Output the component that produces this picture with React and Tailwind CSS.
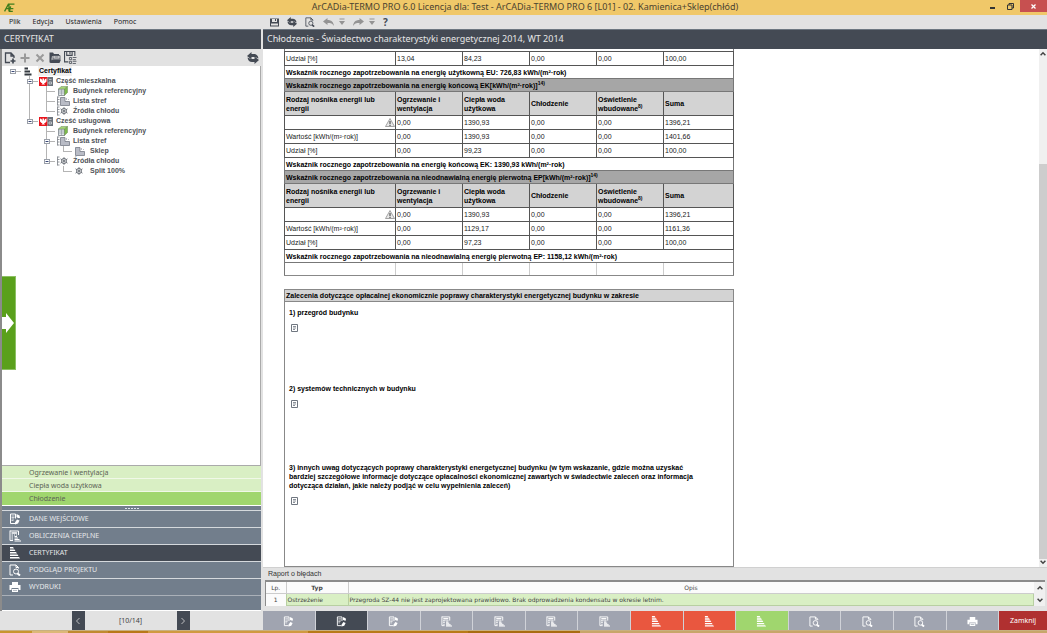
import React, { useState } from 'react';

const Logo = () => (
  <svg viewBox="0 0 20 16" className="h-[9px] w-[11px]" fill="none" stroke="#3f7d1c" strokeWidth="2.4">
    <path d="M1 15L8 2H19M4 10H17M9 2V15M12 6L10 15H16" />
  </svg>
);

const SaveIcon = () => (
  <svg viewBox="0 0 18 18" className="h-[9px] w-[9px]">
    <path d="M0 1H18V17H0Z" fill="#444a54" />
    <path d="M4 2H14V8H4ZM2 11H16V15H2Z" fill="#e2e2e2" />
    <path d="M10 2H12V6H10Z" fill="#444a54" />
  </svg>
);

const RefreshIcon = ({ className = 'h-[10px] w-[10px]' }) => (
  <svg viewBox="0 0 24 24" className={className} fill="#444a54">
    <path d="M0 8L9 0V4H14C19 4 22 7 23 13L16 10H9V15Z" />
    <path d="M24 16L15 24V20H10C5 20 2 17 1 11L8 14H15V9Z" />
  </svg>
);

const PreviewIcon = ({ color = '#fff', className = 'h-3 w-3' }) => (
  <svg viewBox="0 0 24 24" className={className} fill="none" stroke={color} strokeWidth="2">
    <path d="M8 22H2V2H14L19 7V9M14 2V7H19" />
    <circle cx="14" cy="15" r="5" />
    <path d="M17 19L22 23" strokeWidth="4" />
  </svg>
);

const EditDocIcon = ({ className = 'h-3 w-3' }) => (
  <svg viewBox="0 0 24 24" className={className} fill="none" stroke="#fff" strokeWidth="2">
    <path d="M12 21H3V2H13V11" />
    <path d="M5 6H11M5 9H11M5 12H10M5 15H9" strokeWidth="1.4" />
    <path d="M15 2L21 5L22 10H18L15 8Z" fill="#fff" stroke="none" />
    <path d="M12 19L16 13L21 15L18 21L12 23Z" fill="#fff" stroke="none" />
  </svg>
);

const CalcIcon = ({ className = 'h-3 w-3' }) => (
  <svg viewBox="0 0 24 24" className={className} fill="none" stroke="#fff">
    <path d="M2 2H19V10M2 1V21H8" strokeWidth="2" />
    <path d="M5 6H16" strokeWidth="3" />
    <path d="M5 10H8M10 10H12M14 10H16M5 14H8M5 18H8" strokeWidth="2.4" />
    <path d="M11 13H16M11 16H18M11 19H21M11 22H24" strokeWidth="2.2" />
  </svg>
);

const StairsIcon = ({ color = '#fff', className = 'h-3 w-3' }) => (
  <svg viewBox="0 0 24 24" className={className} fill={color}>
    <path d="M2 0H8L10 3H2ZM2 5H11L13 8H2ZM2 10H14L16 13H2ZM2 15H17L19 18H2ZM2 20H20L22 23H2Z" />
  </svg>
);

const CertIcon = () => (
  <svg viewBox="0 0 16 18" className="h-[9px] w-2" fill="#33383f">
    <path d="M1 1H8V5H1ZM1 7H12V11H1ZM1 13H15V17H1Z" />
  </svg>
);

const PrinterIcon = ({ className = 'h-3 w-3' }) => (
  <svg viewBox="0 0 24 24" className={className}>
    <path d="M6 2H18V8H6ZM1 8H23V18H19V14H5V18H1ZM6 16H18V22H6Z" fill="#fff" />
    <path d="M8 18H16V19H8Z" fill="#727e8c" />
  </svg>
);

const NewDocIcon = () => (
  <svg viewBox="0 0 24 24" className="h-3 w-3" fill="none" stroke="#444a54" strokeWidth="2.6">
    <path d="M12 21H3V2H14L20 8V12M14 2V8H20" />
    <path d="M18 13V23M13 18H23" strokeWidth="3.4" />
  </svg>
);

const OpenIcon = () => (
  <svg viewBox="0 0 24 24" className="h-3 w-3">
    <path d="M1 1H8L10 4H20V8H6L4 21H1Z" fill="#444a54" />
    <path d="M8 7H22V14H8Z" fill="#e2e2e2" stroke="#444a54" strokeWidth="1.6" />
    <path d="M11 10H19" stroke="#444a54" strokeWidth="1.6" />
    <path d="M5 15H24L21 22H2Z" fill="#444a54" />
  </svg>
);

const SaveListIcon = () => (
  <svg viewBox="0 0 24 24" className="h-[13px] w-[13px]" fill="none" stroke="#444a54" strokeWidth="2">
    <path d="M8 20H1V1H20V9M5 1V8H15V1M11 2V6" />
    <path d="M10 12H14V16H10ZM10 19H14V23H10ZM16 12H23M16 16H22M16 19H23M16 23H22" strokeWidth="1.5" />
  </svg>
);

const WarningIcon = () => (
  <svg viewBox="0 0 20 18" className="h-[9px] w-[10px]">
    <path d="M10 1L19 17H1Z" fill="#e9e9e9" stroke="#8e8e8e" strokeWidth="1.6" />
    <path d="M10 6V12M10 13.5V16" stroke="#333" strokeWidth="2" />
  </svg>
);

const NoteIcon = () => (
  <svg viewBox="0 0 14 16" className="h-2 w-[7px]" fill="none" stroke="#6f7680" strokeWidth="2">
    <path d="M1 1H13V15H1Z" fill="#fff" />
    <path d="M4 5H10M4 8H10M4 11H8" strokeWidth="1.6" />
  </svg>
);

const ArrowIcon = ({ flip }) => (
  <svg viewBox="0 0 22 16" className={`h-2 w-[11px] ${flip ? '-scale-x-100' : ''}`} fill="#949494">
    <path d="M0 7L9 0V4C17 4 21 8 22 16C19 11 16 10 9 10V14Z" />
  </svg>
);

const DropIcon = () => (
  <svg viewBox="0 0 12 16" className="h-2 w-[6px]" fill="#949494">
    <path d="M1 1H11V3H1ZM0 6H12L6 14Z" />
  </svg>
);

const EagleIcon = () => (
  <svg viewBox="0 0 28 18" className="h-[9px] w-[14px]">
    <path d="M0 0H17V18H0Z" fill="#e8141c" />
    <path d="M2 3L5 4L7 8V3H10V8L12 4L15 3V9L12 12H10L12 15H5L7 12H5L2 9Z" fill="#fff" />
    <path d="M17 0H28V18H17Z" fill="#6b727b" />
    <path d="M20 5H25M20 10H25V14H20Z" stroke="#d5d8db" strokeWidth="1.5" fill="none" />
  </svg>
);

const CubeIcon = () => (
  <svg viewBox="0 0 20 20" className="h-[10px] w-[10px]">
    <path d="M1 6H13V19H1Z" fill="#dfe5e8" stroke="#6b727b" strokeWidth="1.4" />
    <path d="M1 6L6 1H19L13 6Z" fill="#a6d37a" stroke="#6f8a5b" />
    <path d="M13 6L19 1V13L13 19Z" fill="#7dbb4c" stroke="#6f8a5b" />
    <path d="M1 10H13M1 14H13M7 6V19" stroke="#8d959d" strokeWidth="1.2" />
  </svg>
);

const Bracket = () => (
  <svg viewBox="0 0 8 20" className="h-[10px] w-1" fill="none" stroke="#777c84" strokeWidth="1.6">
    <path d="M3 1V19M3 2H7M3 7H7M3 12H7M3 18H7" />
  </svg>
);

const ZoneIcon = () => (
  <svg viewBox="0 0 20 18" className="h-[9px] w-[10px]">
    <path d="M1 1H10V9H19V17H1Z" fill="#b9bcc6" stroke="#777c88" strokeWidth="1.6" />
    <path d="M13 2V6M17 4V6" stroke="#a9acb6" strokeWidth="1.6" />
  </svg>
);

const FlakeIcon = () => (
  <svg viewBox="0 0 18 18" className="h-2 w-2" fill="none" stroke="#50565f" strokeWidth="1.5">
    <path d="M9 0V18M1 4L17 14M17 4L1 14" />
    <circle cx="9" cy="9" r="6" />
  </svg>
);

const treeIcons = {
  cert: <CertIcon />,
  eagle: <EagleIcon />,
  cube: <CubeIcon />,
  zones: <><Bracket /><ZoneIcon /></>,
  zone: <ZoneIcon />,
  coolList: <><Bracket /><FlakeIcon /></>,
  cool: <FlakeIcon />,
};

// guides: b = blank, v = vertical, t = branch, e = last branch, n = open node, l = last open node, r = root
const treeRows = [
  { guides: 'r', icon: 'cert', label: 'Certyfikat' },
  { guides: 'bn', icon: 'eagle', label: 'Część mieszkalna' },
  { guides: 'bvt', icon: 'cube', label: 'Budynek referencyjny' },
  { guides: 'bvt', icon: 'zones', label: 'Lista stref' },
  { guides: 'bve', icon: 'coolList', label: 'Źródła chłodu' },
  { guides: 'bl', icon: 'eagle', label: 'Cześć usługowa' },
  { guides: 'bbt', icon: 'cube', label: 'Budynek referencyjny' },
  { guides: 'bbn', icon: 'zones', label: 'Lista stref' },
  { guides: 'bbve', icon: 'zone', label: 'Sklep' },
  { guides: 'bbl', icon: 'coolList', label: 'Źródła chłodu' },
  { guides: 'bbbe', icon: 'cool', label: 'Split 100%' },
];

const Guide = ({ type }) => {
  const up = 'vtenl'.includes(type);
  const down = 'vtn'.includes(type);
  const side = 'tenlr'.includes(type);
  return (
    <svg viewBox="0 0 17 10" className="h-[10px] w-[17px] shrink-0" fill="none" stroke="#b4b4b4">
      {up && <path d="M8.5 0V5" />}
      {down && <path d="M8.5 5V10" />}
      {side && <path d="M8 5.5H17" />}
      {'nlr'.includes(type) && (
        <g>
          <rect x="6.5" y="3.5" width="5" height="4" fill="#fff" stroke="#9a9fa8" />
          <path d="M7.5 5.5H10.5" stroke="#3b4a78" />
        </g>
      )}
    </svg>
  );
};

const Sup = ({ children }) => <sup className="text-[5px] leading-none">{children}</sup>;

const energyColumns = [
  'Rodzaj nośnika energii lub energii',
  'Ogrzewanie i wentylacja',
  'Ciepła woda użytkowa',
  'Chłodzenie',
  <>Oświetlenie wbudowane<Sup>8)</Sup></>,
  'Suma',
];

const ek = [
  ['', '0,00', '1390,93', '0,00', '0,00', '1396,21'],
  ['Wartość [kWh/(m²·rok)]', '0,00', '1390,93', '0,00', '0,00', '1401,66'],
  ['Udział [%]', '0,00', '99,23', '0,00', '0,00', '100,00'],
];

const ep = [
  ['', '0,00', '1390,93', '0,00', '0,00', '1396,21'],
  ['Wartość [kWh/(m²·rok)]', '0,00', '1129,17', '0,00', '0,00', '1161,36'],
  ['Udział [%]', '0,00', '97,23', '0,00', '0,00', '100,00'],
];

const DataRow = ({ cells }) => (
  <tr className="h-[14px]">
    {cells.map((cell, i) => (
      <td key={i} className="border border-[#555] p-0 pl-px text-[#222]">
        {cell || <span className="flex justify-end"><WarningIcon /></span>}
      </td>
    ))}
  </tr>
);

const SummaryRow = ({ children }) => (
  <tr className="h-[13px]">
    <td colSpan={6} className="border border-[#777] p-0 pl-px font-bold">{children}</td>
  </tr>
);

const EnergySection = ({ title, rows, summary }) => (
  <>
    <tr className="h-[13px] bg-[#a6a6a6]">
      <th colSpan={6} className="border border-[#777] p-0 pl-px text-left font-bold">{title}<Sup>14)</Sup></th>
    </tr>
    <tr className="h-6 bg-[#d3d3d3]">
      {energyColumns.map((column, i) => (
        <th key={i} className="border border-[#555] p-0 pl-px text-left leading-[9px] font-bold">{column}</th>
      ))}
    </tr>
    {rows.map((cells, i) => (
      <DataRow key={i} cells={cells} />
    ))}
    <SummaryRow>{summary}</SummaryRow>
  </>
);

const EnergyTable = () => (
  <table className="w-[450px] table-fixed border-collapse border border-[#777] leading-[9px]">
    <colgroup>
      <col className="w-[111px]" />
      <col className="w-[67px]" />
      <col className="w-[67px]" />
      <col className="w-[67px]" />
      <col className="w-[67px]" />
      <col />
    </colgroup>
    <tbody>
      <DataRow cells={['Udział [%]', '13,04', '84,23', '0,00', '0,00', '100,00']} />
      <SummaryRow>Wskaźnik rocznego zapotrzebowania na energię użytkowną EU: 726,83 kWh/(m²·rok)</SummaryRow>
      <EnergySection
        title="Wskaźnik rocznego zapotrzebowania na energię końcową EK[kWh/(m²·rok)]"
        rows={ek}
        summary="Wskaźnik rocznego zapotrzebowania na energię końcową EK: 1390,93 kWh/(m²·rok)"
      />
      <EnergySection
        title="Wskaźnik rocznego zapotrzebowania na nieodnawialną energię pierwotną EP[kWh/(m²·rok)]"
        rows={ep}
        summary="Wskaźnik rocznego zapotrzebowania na nieodnawialną energię pierwotną EP: 1158,12 kWh/(m²·rok)"
      />
      <tr className="h-[13px]">
        {[0, 1, 2, 3, 4, 5].map((i) => (
          <td key={i} className="border border-[#ccc] border-b-[#888] p-0 first:border-l-[#777] last:border-r-[#777]" />
        ))}
      </tr>
    </tbody>
  </table>
);

const Recommendation = ({ children, className = '' }) => (
  <section className={`flex flex-col items-start gap-[7px] px-1 leading-[9px] ${className}`}>
    <h3 className="font-bold">{children}</h3>
    <button aria-label="Edytuj" className="ml-[2px]"><NoteIcon /></button>
  </section>
);

const Chevron = ({ d }) => (
  <svg viewBox="0 0 10 10" className="h-[6px] w-[6px]" fill="none" stroke="#444" strokeWidth="2.5"><path d={d} /></svg>
);

const navItems = [
  { label: 'DANE WEJŚCIOWE', Icon: EditDocIcon },
  { label: 'OBLICZENIA CIEPLNE', Icon: CalcIcon },
  { label: 'CERTYFIKAT', Icon: StairsIcon },
  { label: 'PODGLĄD PROJEKTU', Icon: PreviewIcon },
  { label: 'WYDRUKI', Icon: PrinterIcon },
];

const Sidebar = () => {
  const [section, setSection] = useState('CERTYFIKAT');
  const [step, setStep] = useState('Chłodzenie');

  return (
    <aside className="flex w-[261px] shrink-0 flex-col bg-[#e2e2e2]">
      <h2 className="h-5 border-t border-[#6d7781] bg-[#444a54] pl-1 text-[9px] leading-[17px] text-[#e6e6e6]">CERTYFIKAT</h2>
      <div className="flex min-h-0 flex-1 flex-col border-l-2 border-[#8b8b8b]">
        <div className="flex h-[17px] shrink-0 items-center gap-[3px] pr-[2px] pl-[2px]">
          <button aria-label="Nowy"><NewDocIcon /></button>
          <button aria-label="Dodaj">
            <svg viewBox="0 0 24 24" className="h-3 w-3" stroke="#9a9a9a" strokeWidth="4"><path d="M12 3V21M3 12H21" /></svg>
          </button>
          <button aria-label="Usuń">
            <svg viewBox="0 0 24 24" className="h-3 w-3" stroke="#9a9a9a" strokeWidth="4"><path d="M5 5L19 19M19 5L5 19" /></svg>
          </button>
          <button aria-label="Otwórz"><OpenIcon /></button>
          <button aria-label="Zapisz listę"><SaveListIcon /></button>
          <button aria-label="Odśwież" className="ml-auto"><RefreshIcon className="h-3 w-3" /></button>
        </div>

        <div className="relative min-h-0 flex-1 overflow-hidden border-r border-[#aaa] bg-white">
          <ul className="pl-[2px] font-['Liberation_Sans',Arial,sans-serif] text-[7px] font-bold text-[#4f5358]">
            {treeRows.map(({ guides, icon, label }, i) => (
              <li key={i} className="flex h-[10px] items-center">
                {guides.split('').map((type, j) => (
                  <Guide key={j} type={type} />
                ))}
                <span className="flex w-[17px] shrink-0 items-center pl-px">
                  {guides === 'r' || icon === 'zone' || icon === 'cool' || icon === 'cube' ? <span className="w-[2px]" /> : null}
                  {treeIcons[icon]}
                </span>
                <span className={`leading-[10px] ${i === 0 ? 'bg-[#f0f0f0] px-px text-black' : 'px-px'}`}>{label}</span>
              </li>
            ))}
          </ul>
          <button
            aria-label="Rozwiń"
            className="absolute top-[210px] left-0 flex h-[94px] w-[14px] items-center border-y border-r border-[#8cc063] bg-[#5aa01c]"
          >
            <svg viewBox="0 0 12 20" className="h-5 w-3" fill="#fff"><path d="M0 4H4V0L12 10L4 20V16H0Z" /></svg>
          </button>
        </div>

        <div className="shrink-0 border-t border-[#aaa] text-[7px] text-[#5c6356]">
          {['Ogrzewanie i wentylacja', 'Ciepła woda użytkowa', 'Chłodzenie'].map((label) => (
            <button
              key={label}
              onClick={() => setStep(label)}
              className={`block h-[13px] w-full pl-[27px] text-left leading-[14px] ${
                step === label ? 'bg-[#a0d66e]' : 'border-b border-[#f0f8e8] bg-[#d9efc4]'
              }`}
            >
              {label}
            </button>
          ))}
        </div>

        <div className="flex h-[5px] shrink-0 items-center justify-center gap-px border-t border-white bg-[#727e8c]">
          {[0, 1, 2, 3, 4].map((i) => (
            <span key={i} className="h-px w-[2px] bg-[#dfe6ee]" />
          ))}
        </div>

        <nav className="flex h-[101px] shrink-0 flex-col border-b border-white bg-[#727e8c]">
          {navItems.map(({ label, Icon }) => (
            <button
              key={label}
              onClick={() => setSection(label)}
              className={`flex h-[17px] items-center gap-2 border-t border-[#d5d9dd] pl-[7px] text-[7px] text-[#e6e8ea] ${
                section === label ? 'bg-[#444a54]' : ''
              }`}
            >
              <Icon />
              {label}
            </button>
          ))}
          <div className="border-t border-[#aab0b8]" />
        </nav>
      </div>
    </aside>
  );
};

const ErrorReport = () => (
  <section className="shrink-0 border-t border-[#d0d0d0] px-[2px] pb-[5px]">
    <h3 className="pl-[3px] font-['Liberation_Sans',Arial,sans-serif] text-[7px] leading-[12px] text-[#333]">Raport o błędach</h3>
    <div className="flex border-t-2 border-l border-[#8b8b8b] bg-[#fbfbfb] font-['DejaVu_Sans',Verdana,sans-serif] text-[6px]">
      <table className="flex-1 table-fixed border-collapse text-[#444]">
        <colgroup>
          <col className="w-5" />
          <col className="w-[62px]" />
          <col />
        </colgroup>
        <thead>
          <tr className="h-3">
            <th className="border-r border-b border-[#ccc] p-0 font-normal">Lp.</th>
            <th className="border-r border-b border-[#ccc] p-0 font-bold">Typ</th>
            <th className="border-b border-[#ccc] p-0 font-normal">Opis</th>
          </tr>
        </thead>
        <tbody>
          <tr className="h-3">
            <td className="p-0 text-center">1</td>
            <td className="border border-[#b8cfa2] bg-[#d9efc4] p-0 pl-px">Ostrzeżenie</td>
            <td className="border border-[#b8cfa2] bg-[#d9efc4] p-0 pl-px">
              Przegroda SZ-44 nie jest zaprojektowana prawidłowo. Brak odprowadzenia kondensatu w okresie letnim.
            </td>
          </tr>
        </tbody>
      </table>
      <div className="flex w-[11px] flex-col items-center justify-around bg-[#f0f0f0]">
        <Chevron d="M1 7L5 3L9 7" />
        <Chevron d="M1 3L5 7L9 3" />
      </div>
    </div>
  </section>
);

const stepButtons = [
  { label: 'Dane 1', Icon: EditDocIcon, color: 'bg-[#a0a4b0]' },
  { label: 'Dane 2', Icon: EditDocIcon, color: 'bg-[#444a54]' },
  { label: 'Dane 3', Icon: EditDocIcon, color: 'bg-[#a0a4b0]' },
  { label: 'Obliczenia 1', Icon: CalcIcon, color: 'bg-[#a0a4b0]' },
  { label: 'Obliczenia 2', Icon: CalcIcon, color: 'bg-[#a0a4b0]' },
  { label: 'Obliczenia 3', Icon: CalcIcon, color: 'bg-[#a0a4b0]' },
  { label: 'Obliczenia 4', Icon: CalcIcon, color: 'bg-[#a0a4b0]' },
  { label: 'Certyfikat 1', Icon: StairsIcon, color: 'bg-[#e9573f]' },
  { label: 'Certyfikat 2', Icon: StairsIcon, color: 'bg-[#e9573f]' },
  { label: 'Certyfikat 3', Icon: StairsIcon, color: 'bg-[#a0d66e]' },
  { label: 'Podgląd 1', Icon: PreviewIcon, color: 'bg-[#a0a4b0]' },
  { label: 'Podgląd 2', Icon: PreviewIcon, color: 'bg-[#a0a4b0]' },
  { label: 'Podgląd 3', Icon: PreviewIcon, color: 'bg-[#a0a4b0]' },
  { label: 'Wydruki', Icon: PrinterIcon, color: 'bg-[#a0a4b0]' },
];

const Footer = () => (
  <footer className="flex h-[19px] shrink-0 bg-[#e2e2e2]">
    <div className="mr-[2px] flex w-[261px] shrink-0 items-stretch justify-center text-[7px] text-[#444]">
      <button aria-label="Wstecz" className="flex w-[13px] items-center justify-center bg-[#444a54]">
        <svg viewBox="0 0 8 14" className="h-2 w-1" fill="none" stroke="#ddd" strokeWidth="1.6"><path d="M7 1L1 7L7 13" /></svg>
      </button>
      <span className="w-[92px] text-center leading-[20px]">[10/14]</span>
      <button aria-label="Dalej" className="flex w-[13px] items-center justify-center bg-[#444a54]">
        <svg viewBox="0 0 8 14" className="h-2 w-1" fill="none" stroke="#ddd" strokeWidth="1.6"><path d="M1 1L7 7L1 13" /></svg>
      </button>
    </div>
    {stepButtons.map(({ label, Icon, color }) => (
      <button
        key={label}
        aria-label={label}
        className={`flex flex-1 items-center justify-center border-r border-[#d0d2d8] pt-px ${color}`}
      >
        <Icon className="h-[11px] w-[11px]" />
      </button>
    ))}
    <button className="w-12 bg-[#b03030] pt-px text-[7px] text-white">Zamknij</button>
  </footer>
);

export default function App() {
  return (
    <div className="flex h-screen flex-col overflow-hidden bg-[#e2e2e2] font-['Noto_Sans','Open_Sans',sans-serif]">
      <header className="flex h-[15px] shrink-0 items-start bg-[#f0c869]">
        <span className="flex w-[60px] pt-[3px] pl-1"><Logo /></span>
        <h1 className="flex-1 text-center text-[9px] leading-[14px] text-[#4a4230]">
          ArCADia-TERMO PRO 6.0 Licencja dla: Test - ArCADia-TERMO PRO 6 [L01] - 02. Kamienica+Sklep(chłód)
        </h1>
        <button aria-label="Minimalizuj" className="mt-[7px] mr-3 h-[2px] w-[5px] bg-[#333]" />
        <button aria-label="Przywróć" className="mt-[3px] mr-[6px]">
          <svg viewBox="0 0 14 14" className="h-[7px] w-[7px]" fill="none" stroke="#333" strokeWidth="2"><path d="M1 4H10V13H1ZM4 4V1H13V10H10" /></svg>
        </button>
        <button aria-label="Zamknij okno" className="flex h-3 w-[27px] items-center justify-center bg-[#c75050]">
          <svg viewBox="0 0 10 10" className="h-[5px] w-[5px]" stroke="#fff" strokeWidth="2.5"><path d="M1 1L9 9M9 1L1 9" /></svg>
        </button>
      </header>

      <div className="flex h-[14px] shrink-0 items-center bg-[#e2e2e2]">
        <nav className="flex w-[270px] gap-3 pl-[9px] text-[7px] leading-[14px] text-[#222]">
          <button>Plik</button>
          <button>Edycja</button>
          <button>Ustawienia</button>
          <button>Pomoc</button>
        </nav>
        <div className="flex items-center">
          <button aria-label="Zapisz" className="mr-2"><SaveIcon /></button>
          <button aria-label="Odśwież" className="mr-2"><RefreshIcon /></button>
          <button aria-label="Podgląd" className="mr-2"><PreviewIcon color="#444a54" className="h-[10px] w-[10px]" /></button>
          <button aria-label="Cofnij" className="mr-[5px]"><ArrowIcon /></button>
          <button aria-label="Lista cofnięć" className="mr-2"><DropIcon /></button>
          <button aria-label="Ponów" className="mr-[5px]"><ArrowIcon flip /></button>
          <button aria-label="Lista ponowień" className="mr-2"><DropIcon /></button>
          <button className="text-[10px] leading-[14px] font-bold text-[#444a54]">?</button>
        </div>
      </div>

      <div className="flex min-h-0 flex-1 gap-[2px]">
        <Sidebar />
        <main className="flex min-w-0 flex-1 flex-col">
          <h2 className="h-5 shrink-0 border-t border-[#6d7781] bg-[#444a54] pl-1 text-[9px] leading-[17px] text-[#e6e6e6]">
            Chłodzenie - Świadectwo charakterystyki energetycznej 2014, WT 2014
          </h2>
          <div className="flex min-h-0 flex-1 overflow-hidden bg-white">
            <div className="flex min-w-0 flex-1 flex-col items-start pl-[21px] font-['Liberation_Sans',Arial,sans-serif] text-[7px] text-black">
              <div className="h-[2px] w-[450px] shrink-0 border-x border-[#777]" />
              <EnergyTable />
              <div className="mt-[13px] flex w-[450px] flex-1 flex-col border border-[#888]">
                <h3 className="h-3 border-b border-[#888] bg-[#d3d3d3] pl-px leading-[11px] font-bold">
                  Zalecenia dotyczące opłacalnej ekonomicznie poprawy charakterystyki energetycznej budynku w zakresie
                </h3>
                <Recommendation className="mt-[6px] h-[76px]">1) przegród budynku</Recommendation>
                <Recommendation className="h-[79px]">2) systemów technicznych w budynku</Recommendation>
                <Recommendation>
                  3) innych uwag dotyczących poprawy charakterystyki energetycznej budynku (w tym wskazanie, gdzie można uzyskać<br />
                  bardziej szczegółowe informacje dotyczące opłacalności ekonomicznej zawartych w świadectwie zaleceń oraz informacja<br />
                  dotycząca działań, jakie należy podjąć w celu wypełnienia zaleceń)
                </Recommendation>
              </div>
            </div>
            <div className="flex w-2 flex-col items-center bg-[#f0f0f0] py-[2px]">
              <Chevron d="M1 7L5 3L9 7" />
              <div className="mt-auto h-[395px] w-full bg-[#cdcdcd]" />
              <Chevron d="M1 3L5 7L9 3" />
            </div>
          </div>
          <ErrorReport />
        </main>
      </div>

      <Footer />
      <div className="flex h-[3px] shrink-0 border-t border-[#c8b080]">
        <span className="w-8 bg-[#c8952e]" />
        <span className="w-9 bg-[#dcb878]" />
        <span className="w-10 bg-[#c08a30]" />
        <span className="w-10 bg-[#b87818]" />
        <span className="w-40 bg-[#d09a40]" />
        <span className="w-40 bg-[#b87a18]" />
        <span className="w-28 bg-[#a86c10]" />
        <span className="flex-1 bg-[#c8a66a]" />
      </div>
    </div>
  );
}
